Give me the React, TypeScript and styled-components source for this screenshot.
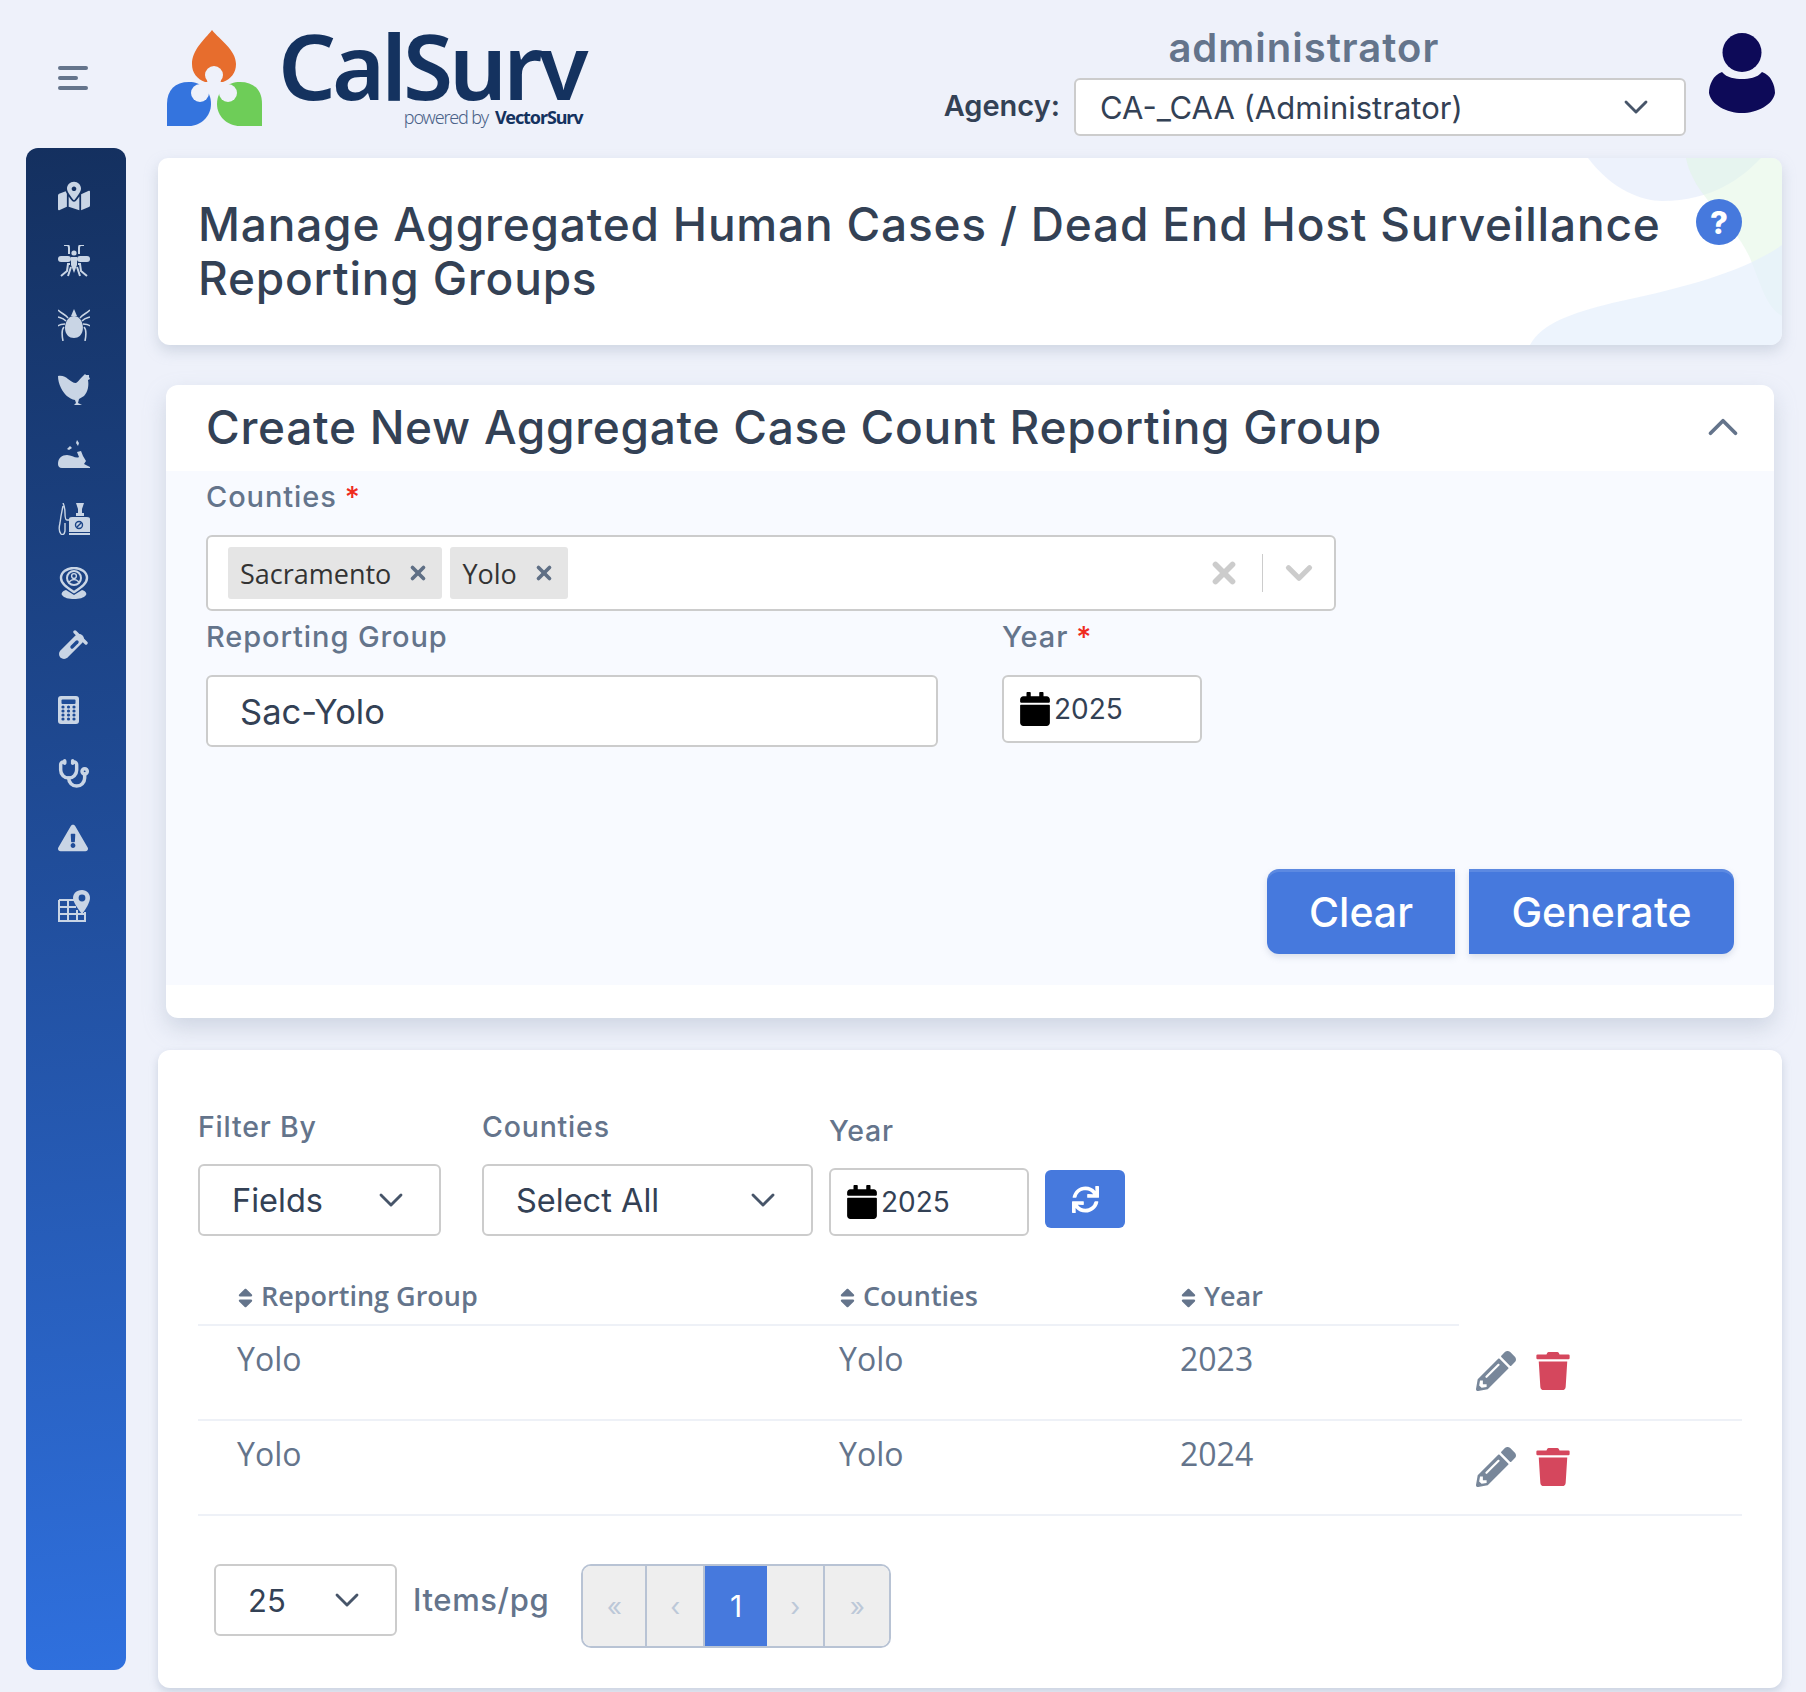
import React, {FC} from "react";
import styled, {createGlobalStyle} from "styled-components";
import {ChevronDown, ChevronUp, X} from "lucide-react";
import {
    FaCalendar,
    FaExclamationTriangle,
    FaMapMarkedAlt,
    FaPencilAlt,
    FaSort,
    FaSync,
    FaTrash,
} from "react-icons/fa";
import {LuStethoscope} from "react-icons/lu";

const HEADING_FONT = `Inter, "Liberation Sans", sans-serif`;
const BODY_FONT = `"Open Sans", "Liberation Sans", sans-serif`;

const GlobalStyle = createGlobalStyle`
    html, body {
        margin: 0;
        background: #eef1fa;
    }
    * {
        box-sizing: border-box;
    }
`;

const Page = styled.div`
    display: grid;
    grid-template-columns: 158px 1624px;
    width: 1806px;
    height: 1692px;
    overflow: hidden;
    font-family: ${HEADING_FONT};
    color: #334155;
`;

const LeftColumn = styled.div`
    display: flex;
    flex-direction: column;
`;

const MenuButton = styled.div`
    display: flex;
    flex-direction: column;
    gap: 6px;
    height: 148px;
    padding: 66px 0 0 58px;
`;

const MenuBar = styled.span<{$short?: boolean}>`
    display: block;
    width: ${props => (props.$short ? "20px" : "30px")};
    height: 4px;
    border-radius: 2px;
    background: #64748b;
`;

const Sidebar = styled.nav`
    display: flex;
    flex-direction: column;
    gap: 32.5px;
    width: 100px;
    height: 1522px;
    margin-left: 26px;
    padding: 32px 0 0 32px;
    border-radius: 12px;
    background: linear-gradient(175deg, #14305f 0%, #214f9e 50%, #2f70de 100%);
    color: #c9d5e5;
`;

const NavIcon = styled.div<{$lift?: number}>`
    display: flex;
    align-items: center;
    width: 32px;
    height: 32px;
    margin-top: ${props => -(props.$lift ?? 0)}px;
    margin-bottom: ${props => props.$lift ?? 0}px;
`;

const Main = styled.main`
    display: flex;
    flex-direction: column;
`;

const Header = styled.header`
    display: flex;
    justify-content: space-between;
    height: 158px;
`;

const Brand = styled.div`
    display: flex;
    gap: 16px;
    padding: 30px 0 0 9px;
`;

const BrandText = styled.div`
    display: flex;
    flex-direction: column;
    align-items: flex-end;
    margin-top: -4px;
`;

const BrandName = styled.div`
    font-family: "Noto Sans", sans-serif;
    font-size: 91px;
    font-weight: 600;
    line-height: 78px;
    letter-spacing: -4px;
    color: #14325f;
`;

const PoweredBy = styled.div`
    margin: 1px 2px 0 0;
    font-family: "Noto Sans", sans-serif;
    font-size: 18px;
    font-weight: 300;
    line-height: 24px;
    letter-spacing: -1.1px;
    color: #4a6288;

    strong {
        margin-left: 7px;
        font-weight: 700;
        color: #14325f;
    }
`;

const UserArea = styled.div`
    display: flex;
    gap: 23px;
    margin-right: 7px;
    padding-top: 33px;
`;

const UserInfo = styled.div`
    display: flex;
    flex-direction: column;
    margin-top: -8px;
`;

const UserName = styled.div`
    height: 53px;
    padding-right: 22px;
    font-size: 40px;
    font-weight: 600;
    line-height: 46px;
    letter-spacing: 1px;
    text-align: center;
    color: #64748b;
`;

const AgencyRow = styled.div`
    display: flex;
    align-items: center;
    gap: 14px;
`;

const AgencyLabel = styled.div`
    margin-top: -3px;
    font-size: 29px;
    font-weight: 600;
    color: #334155;
`;

const Select = styled.div<{$width: number; $height: number; $pad?: number; $size?: number}>`
    display: flex;
    align-items: center;
    justify-content: space-between;
    width: ${props => props.$width}px;
    height: ${props => props.$height}px;
    padding: 0 28px 0 ${props => props.$pad ?? 32}px;
    border: 2px solid #cccccc;
    border-radius: 6px;
    background: #fff;
    font-size: ${props => props.$size ?? 32.5}px;
    color: #334155;
`;

const SelectChevron = styled(ChevronDown).attrs({size: 40, strokeWidth: 1.7})`
    color: #475569;
`;

const TitleCard = styled.section`
    position: relative;
    display: flex;
    justify-content: space-between;
    height: 187px;
    padding: 39px 40px 0 40px;
    overflow: hidden;
    border-radius: 10px 10px 12px 12px;
    background: #fff;
    box-shadow: 0 6px 14px rgba(148, 163, 184, 0.35);
`;

const TitleBlob = styled.svg`
    position: absolute;
    top: 0;
    right: 0;
`;

const PageTitle = styled.h1`
    position: relative;
    width: 1490px;
    margin: 0;
    font-size: 46px;
    font-weight: 500;
    line-height: 54px;
    letter-spacing: 0.8px;
    color: #334155;
`;

const HelpBadge = styled.div`
    position: relative;
    display: flex;
    align-items: center;
    justify-content: center;
    width: 46px;
    height: 46px;
    margin-top: 2px;
    border-radius: 50%;
    background: #4679dd;
    font-size: 31px;
    font-weight: 800;
    color: #fff;
`;

const FormCard = styled.section`
    display: flex;
    flex-direction: column;
    height: 633px;
    margin: 40px 8px 0;
    padding-bottom: 33px;
    overflow: hidden;
    border-radius: 12px;
    background: #fff;
    box-shadow: 0 10px 22px rgba(148, 163, 184, 0.35);
`;

const FormHeader = styled.div`
    display: flex;
    align-items: center;
    justify-content: space-between;
    height: 84px;
    margin-bottom: 2px;
    padding: 0 26px 0 40px;
    font-size: 46px;
    font-weight: 500;
    letter-spacing: 0.7px;
    color: #334155;

    svg {
        color: #64748b;
    }
`;

const FormBody = styled.div`
    flex: 1;
    padding: 6px 39px 0 40px;
    background: #f8faff;
`;

const FieldLabel = styled.div`
    height: 40px;
    margin-bottom: 18px;
    font-size: 29px;
    font-weight: 500;
    line-height: 40px;
    letter-spacing: 0.9px;
    color: #64748b;
`;

const Required = styled.span`
    margin-left: 8px;
    color: #ef2b1d;
`;

const MultiSelect = styled.div`
    display: flex;
    align-items: center;
    gap: 8px;
    width: 1130px;
    height: 76px;
    margin-bottom: 6px;
    padding: 0 14px 0 20px;
    border: 2px solid #cccccc;
    border-radius: 6px;
    background: #fff;
`;

const Tag = styled.div`
    display: flex;
    align-items: center;
    justify-content: space-between;
    height: 52px;
    padding: 0 13px 0 12px;
    border-radius: 3px;
    background: #e5e5e5;
    font-family: ${BODY_FONT};
    font-size: 27px;
    color: #333;

    svg {
        margin-left: 16px;
        color: #5f6f85;
    }
`;

const MultiIndicators = styled.div`
    display: flex;
    align-items: center;
    gap: 15px;
    margin-left: auto;
    color: #cccccc;
`;

const ClearIcon = styled(X).attrs({size: 34, strokeWidth: 4})`
    margin-right: 6px;
`;

const IndicatorLine = styled.span`
    width: 1px;
    height: 38px;
    background: #cccccc;
`;

const FieldRow = styled.div`
    display: flex;
    gap: 64px;
`;

const TextInput = styled.div`
    display: flex;
    align-items: center;
    width: 732px;
    height: 72px;
    padding-left: 32px;
    border: 2px solid #cccccc;
    border-radius: 6px;
    background: #fff;
    font-size: 34.5px;
    color: #334155;
`;

const YearInput = styled.div`
    display: flex;
    align-items: center;
    gap: 4px;
    width: 200px;
    height: 68px;
    padding-left: 16px;
    border: 2px solid #cccccc;
    border-radius: 6px;
    background: #fff;
    font-size: 28px;
    color: #334155;

    svg {
        width: 30px;
        height: 34px;
        color: #000;
    }
`;

const FormActions = styled.div`
    display: flex;
    justify-content: flex-end;
    gap: 14px;
    margin-top: 122px;
    padding-right: 1px;
`;

const ActionButton = styled.button<{$side: "left" | "right"; $width: number}>`
    width: ${props => props.$width}px;
    height: 85px;
    border: 0;
    border-radius: ${props => (props.$side === "left" ? "12px 0 0 12px" : "0 12px 12px 0")};
    background: #4679dd;
    box-shadow: inset 0 3px 0 rgba(255, 255, 255, 0.12), 0 3px 6px rgba(148, 163, 184, 0.3);
    font-family: ${HEADING_FONT};
    font-size: 41px;
    font-weight: 500;
    color: #fff;
`;

const TableCard = styled.section`
    height: 638px;
    margin-top: 32px;
    padding: 57px 40px 0;
    border-radius: 12px;
    background: #fff;
    box-shadow: 0 4px 8px rgba(148, 163, 184, 0.4);
`;

const FilterRow = styled.div`
    display: flex;
    align-items: flex-end;
`;

const FilterGroup = styled.div<{$gap: number}>`
    margin-right: ${props => props.$gap}px;
`;

const FilterLabel = styled.div`
    height: 40px;
    margin-bottom: 17px;
    font-size: 28.5px;
    font-weight: 500;
    line-height: 40px;
    letter-spacing: 0.8px;
    color: #64748b;
`;

const RefreshButton = styled.button`
    display: flex;
    align-items: center;
    justify-content: center;
    width: 80px;
    height: 58px;
    margin: 0 0 8px 16px;
    border: 0;
    border-radius: 6px;
    background: #4679dd;
    color: #fff;
`;

const Table = styled.table`
    width: 1544px;
    margin-top: 34px;
    border-collapse: collapse;
    table-layout: fixed;
    font-family: ${BODY_FONT};
`;

const HeadCell = styled.th<{$width: number; $plain?: boolean}>`
    width: ${props => props.$width}px;
    height: 55px;
    padding: 0 0 4px 40px;
    border-bottom: ${props => (props.$plain ? "0" : "2px solid #eef1f7")};
    font-size: 27px;
    font-weight: 600;
    text-align: left;
    color: #64748b;

    svg {
        width: 15px;
        height: 24px;
        margin-right: 8px;
        vertical-align: -4px;
    }
`;

const BodyCell = styled.td`
    height: 95px;
    padding: 11px 0 0 39px;
    border-bottom: 2px solid #eef1f7;
    vertical-align: top;
    font-size: 32px;
    line-height: 44px;
    color: #64748b;
`;

const ActionCell = styled.td`
    padding: 0 0 2px 17px;
    border-bottom: 2px solid #eef1f7;
`;

const RowIcons = styled.div`
    display: flex;
    align-items: center;
    gap: 20px;
`;

const EditIcon = styled(FaPencilAlt)`
    width: 40px;
    height: 40px;
    color: #78879a;
`;

const TrashIcon = styled(FaTrash)`
    width: 34px;
    height: 38px;
    color: #d5475d;
`;

const TableFooter = styled.div`
    display: flex;
    align-items: flex-start;
    margin-top: 48px;
    padding-left: 16px;
`;

const PerPageLabel = styled.div`
    margin: 16px 32px 0 16px;
    font-size: 31px;
    font-weight: 500;
    line-height: 40px;
    letter-spacing: 0.6px;
    color: #64748b;
`;

const Pager = styled.div`
    display: flex;
    height: 84px;
    overflow: hidden;
    border: 2px solid #b8c3d4;
    border-radius: 10px;
`;

const PagerCell = styled.div<{$active?: boolean; $width: number}>`
    display: flex;
    align-items: center;
    justify-content: center;
    width: ${props => props.$width}px;
    margin: ${props => (props.$active ? "-2px 0" : "0")};
    border-right: ${props => (props.$active ? "0" : "2px solid #b8c3d4")};
    background: ${props => (props.$active ? "#4679dd" : "#eeeeee")};
    font-size: ${props => (props.$active ? "30px" : "26px")};
    color: ${props => (props.$active ? "#fff" : "#bcc8d8")};

    &:last-child {
        border-right: 0;
    }
`;

const Logo: FC = () => (
    <svg width="95" height="96" viewBox="0 0 95 96">
        <path d="M45 0C37 10 25 20 25 34C25 43 30 49 38 52L56 52C64 49 69 43 69 34C69 20 53 10 45 0Z" fill="#e76d2d" />
        <path d="M0 96L0 74C0 60 8 52 22 52C34 52 44 60 44 74C44 86 34 96 22 96Z" fill="#3474de" />
        <path d="M95 96L95 74C95 60 87 52 73 52C61 52 50 60 50 74C50 86 60 96 73 96Z" fill="#6ecd58" />
        <circle cx="47" cy="45" r="9" fill="#eef1fa" />
        <circle cx="33" cy="63" r="9" fill="#eef1fa" />
        <circle cx="61" cy="63" r="9" fill="#eef1fa" />
        <path d="M40 50L54 50L52 58L47 72L42 58Z" fill="#eef1fa" />
    </svg>
);

const Avatar: FC = () => (
    <svg width="66" height="80" viewBox="0 0 66 80">
        <ellipse cx="33" cy="19.5" rx="19.5" ry="19.5" fill="#0d0a58" />
        <path d="M13 39C4 42 0 52 0 60C2 72 18 80 33 80C48 80 64 72 66 60C66 52 62 42 53 39C48 45 40 46 33 46C26 46 18 45 13 39Z" fill="#0d0a58" />
    </svg>
);

const MosquitoIcon: FC = () => (
    <svg width="32" height="32" viewBox="0 0 32 32" fill="none" stroke="currentColor" strokeWidth="2">
        <rect x="0" y="11" width="13" height="6" rx="3" fill="currentColor" stroke="none" />
        <rect x="19" y="11" width="13" height="6" rx="3" fill="currentColor" stroke="none" />
        <circle cx="16" cy="8" r="2.6" fill="currentColor" stroke="none" />
        <path d="M13 12H19V20L16 28L13 20Z" fill="currentColor" stroke="none" />
        <path d="M6 0H9Q11 0 11 3V9M26 0H23Q21 0 21 3V9" />
        <path d="M12 19H10L9 26L3 31M20 19H22L23 26L29 31M13 22L10 31M19 22L22 31" />
    </svg>
);

const TickIcon: FC = () => (
    <svg width="32" height="32" viewBox="0 0 32 32" fill="none" stroke="currentColor" strokeWidth="1.6">
        <path d="M13 7L16 0L19 7Z" fill="currentColor" stroke="none" />
        <path d="M10 10C13 6 19 6 22 10C27 16 26 29 16 29C6 29 5 16 10 10Z" fill="currentColor" stroke="none" />
        <path d="M10 9C7 5 4 5 0 1M22 9C25 5 28 5 32 1M8 12C5 9 3 9 0 8M24 12C27 9 29 9 32 8M7 15C4 15 2 15 0 17M25 15C28 15 30 15 32 17M6 18C3 21 4 27 5 32M26 18C29 21 28 27 27 32" />
    </svg>
);

const ChickenIcon: FC = () => (
    <svg width="32" height="32" viewBox="0 0 32 32" fill="currentColor">
        <path d="M0 2C4 1 8 3 10 5C13 7 15 9 18 9C20 8 21 6 24 3L27 0L28 1L31 1L31 3L32 5L30 6C31 11 30 18 26 22L21 25L20 29L24 31L16 31L18 29L17 26C11 25 6 20 3 14C1 10 0 6 0 2Z" />
    </svg>
);

const DeadBirdIcon: FC = () => (
    <svg width="32" height="32" viewBox="0 0 32 32" fill="currentColor">
        <path d="M0 26C0 20 4 17 9 17C14 17 18 21 21 19L19 14L23 13L25 18L28 23L26 26L32 29L32 30L4 30C1 30 0 28 0 26Z" />
        <path d="M19 2L21 5L20 8L18 5Z" />
        <path d="M12 8L14 10L11 12L9 11Z" />
    </svg>
);

const SprayerIcon: FC = () => (
    <svg width="32" height="32" viewBox="0 0 32 32" fill="none" stroke="currentColor" strokeWidth="1.4">
        <path d="M18 0H26L24 6V10H26V13H18V10H20V6Z" fill="currentColor" stroke="none" />
        <path d="M11 16Q11 14 14 14H29Q32 14 32 16V29H11Z" fill="currentColor" stroke="none" />
        <rect x="11" y="30" width="21" height="2" fill="currentColor" stroke="none" />
        <circle cx="21" cy="22" r="3.5" stroke="#1c4587" />
        <path d="M18.5 24.5L23.5 19.5" stroke="#1c4587" />
        <path d="M11 17H9Q7 17 7 10Q7 4 5 0M5 3Q3 12 2 20Q0 28 3 31Q6 33 7 28V20" />
    </svg>
);

const TargetPinIcon: FC = () => (
    <svg width="32" height="32" viewBox="0 0 32 32" fill="none" stroke="currentColor">
        <path d="M16 25C10 21 3 17 3 11C3 5 9 1 16 1C23 1 29 5 29 11C29 17 22 21 16 25Z" strokeWidth="2.4" />
        <circle cx="16" cy="11" r="7" strokeWidth="2" />
        <circle cx="16" cy="9" r="2.4" strokeWidth="1.4" />
        <path d="M11 15Q16 10 21 15" strokeWidth="1.4" />
        <path d="M8 23L16 28L24 23C28 24 29 27 28 28C26 31 21 32 16 32C11 32 6 31 4 28C3 27 4 24 8 23Z" fill="currentColor" stroke="none" />
    </svg>
);

const VialIcon: FC = () => (
    <svg width="30" height="30" viewBox="0 0 30 30" fill="none" stroke="currentColor" strokeLinecap="round">
        <path d="M6 24L21 9" strokeWidth="10" />
        <path d="M17 2L28 13" strokeWidth="3.4" />
        <path d="M14 17L19 12" strokeWidth="3.4" stroke="#1d4a92" />
    </svg>
);

const CalculatorIcon: FC = () => (
    <svg width="21" height="28" viewBox="0 0 21 28">
        <rect width="21" height="28" rx="3" fill="currentColor" />
        <rect x="3.5" y="3.5" width="14" height="4.5" rx="1" fill="#1e4c97" />
        {[11, 15, 19, 23].map(y =>
            [5, 10.5, 16].map(x => <circle key={`${x}-${y}`} cx={x} cy={y} r="1.6" fill="#1e4c97" />),
        )}
    </svg>
);

const TablePinIcon: FC = () => (
    <svg width="32" height="32" viewBox="0 0 32 32" fill="none" stroke="currentColor" strokeWidth="2">
        <path d="M1 10H16M1 10V31H27V22M1 17H18M1 24H27M10 10V31M19 20V31" />
        <path d="M24 0C18 0 15 4 15 8C15 12 20 19 24 24C28 19 32 12 32 8C32 4 29 0 24 0Z" fill="currentColor" stroke="none" />
        <circle cx="24" cy="8" r="3.4" fill="#1f4f9c" stroke="none" />
    </svg>
);

const YearField: FC<{value: string}> = ({value}) => (
    <YearInput>
        <FaCalendar />
        {value}
    </YearInput>
);

const rows = [
    {group: "Yolo", counties: "Yolo", year: "2023"},
    {group: "Yolo", counties: "Yolo", year: "2024"},
];

const navIcons = [
    {key: "map", lift: 0, icon: <FaMapMarkedAlt size={32} />},
    {key: "mosquito", lift: 0, icon: <MosquitoIcon />},
    {key: "tick", lift: 0, icon: <TickIcon />},
    {key: "chicken", lift: 0, icon: <ChickenIcon />},
    {key: "bird", lift: 0, icon: <DeadBirdIcon />},
    {key: "sprayer", lift: 0, icon: <SprayerIcon />},
    {key: "target", lift: 0, icon: <TargetPinIcon />},
    {key: "vial", lift: 3, icon: <VialIcon />},
    {key: "calculator", lift: 2, icon: <CalculatorIcon />},
    {key: "stethoscope", lift: 3, icon: <LuStethoscope size={32} strokeWidth={2.6} />},
    {key: "warning", lift: 3, icon: <FaExclamationTriangle size={30} />},
    {key: "table", lift: 0, icon: <TablePinIcon />},
];

const App: FC = () => (
    <Page>
        <GlobalStyle />
        <LeftColumn>
            <MenuButton>
                <MenuBar />
                <MenuBar $short />
                <MenuBar />
            </MenuButton>
            <Sidebar>
                {navIcons.map(item => (
                    <NavIcon key={item.key} $lift={item.lift}>
                        {item.icon}
                    </NavIcon>
                ))}
            </Sidebar>
        </LeftColumn>
        <Main>
            <Header>
                <Brand>
                    <Logo />
                    <BrandText>
                        <BrandName>CalSurv</BrandName>
                        <PoweredBy>
                            powered by<strong>VectorSurv</strong>
                        </PoweredBy>
                    </BrandText>
                </Brand>
                <UserArea>
                    <UserInfo>
                        <UserName>administrator</UserName>
                        <AgencyRow>
                            <AgencyLabel>Agency:</AgencyLabel>
                            <Select $width={612} $height={58} $pad={24} $size={31}>
                                CA-_CAA (Administrator)
                                <SelectChevron />
                            </Select>
                        </AgencyRow>
                    </UserInfo>
                    <Avatar />
                </UserArea>
            </Header>
            <TitleCard>
                <TitleBlob width="260" height="187" viewBox="0 0 260 187">
                    <path d="M66 0C90 32 120 43 140 43C190 43 220 20 239 0Z" fill="#dfe7fa" opacity="0.55" />
                    <path d="M164 0C172 40 210 60 228 100C240 130 245 150 260 158L260 0Z" fill="#dff5e2" opacity="0.5" />
                    <path d="M8 187C20 165 50 155 90 145C160 130 220 115 260 87L260 187Z" fill="#e6f0fc" opacity="0.7" />
                </TitleBlob>
                <PageTitle>
                    Manage Aggregated Human Cases / Dead End Host Surveillance
                    <br />
                    Reporting Groups
                </PageTitle>
                <HelpBadge>?</HelpBadge>
            </TitleCard>
            <FormCard>
                <FormHeader>
                    Create New Aggregate Case Count Reporting Group
                    <ChevronUp size={50} strokeWidth={1.8} />
                </FormHeader>
                <FormBody>
                    <FieldLabel>
                        Counties<Required>*</Required>
                    </FieldLabel>
                    <MultiSelect>
                        <Tag>
                            Sacramento
                            <X size={22} strokeWidth={4} />
                        </Tag>
                        <Tag>
                            Yolo
                            <X size={22} strokeWidth={4} />
                        </Tag>
                        <MultiIndicators>
                            <ClearIcon />
                            <IndicatorLine />
                            <ChevronDown size={42} strokeWidth={3} />
                        </MultiIndicators>
                    </MultiSelect>
                    <FieldRow>
                        <div>
                            <FieldLabel>Reporting Group</FieldLabel>
                            <TextInput>Sac-Yolo</TextInput>
                        </div>
                        <div>
                            <FieldLabel>
                                Year<Required>*</Required>
                            </FieldLabel>
                            <YearField value="2025" />
                        </div>
                    </FieldRow>
                    <FormActions>
                        <ActionButton $side="left" $width={188}>
                            Clear
                        </ActionButton>
                        <ActionButton $side="right" $width={265}>
                            Generate
                        </ActionButton>
                    </FormActions>
                </FormBody>
            </FormCard>
            <TableCard>
                <FilterRow>
                    <FilterGroup $gap={41}>
                        <FilterLabel>Filter By</FilterLabel>
                        <Select $width={243} $height={72}>
                            Fields
                            <SelectChevron />
                        </Select>
                    </FilterGroup>
                    <FilterGroup $gap={16}>
                        <FilterLabel>Counties</FilterLabel>
                        <Select $width={331} $height={72}>
                            Select All
                            <SelectChevron />
                        </Select>
                    </FilterGroup>
                    <FilterGroup $gap={0}>
                        <FilterLabel>Year</FilterLabel>
                        <YearField value="2025" />
                    </FilterGroup>
                    <RefreshButton>
                        <FaSync size={27} />
                    </RefreshButton>
                </FilterRow>
                <Table>
                    <thead>
                        <tr>
                            <HeadCell $width={602}>
                                <FaSort />
                                Reporting Group
                            </HeadCell>
                            <HeadCell $width={341}>
                                <FaSort />
                                Counties
                            </HeadCell>
                            <HeadCell $width={318}>
                                <FaSort />
                                Year
                            </HeadCell>
                            <HeadCell $width={283} $plain />
                        </tr>
                    </thead>
                    <tbody>
                        {rows.map(row => (
                            <tr key={row.year}>
                                <BodyCell>{row.group}</BodyCell>
                                <BodyCell>{row.counties}</BodyCell>
                                <BodyCell>{row.year}</BodyCell>
                                <ActionCell>
                                    <RowIcons>
                                        <EditIcon />
                                        <TrashIcon />
                                    </RowIcons>
                                </ActionCell>
                            </tr>
                        ))}
                    </tbody>
                </Table>
                <TableFooter>
                    <Select $width={183} $height={72} $size={31}>
                        25
                        <SelectChevron />
                    </Select>
                    <PerPageLabel>Items/pg</PerPageLabel>
                    <Pager>
                        <PagerCell $width={64}>«</PagerCell>
                        <PagerCell $width={58}>‹</PagerCell>
                        <PagerCell $width={62} $active>
                            1
                        </PagerCell>
                        <PagerCell $width={58}>›</PagerCell>
                        <PagerCell $width={64}>»</PagerCell>
                    </Pager>
                </TableFooter>
            </TableCard>
        </Main>
    </Page>
);

export default App;
